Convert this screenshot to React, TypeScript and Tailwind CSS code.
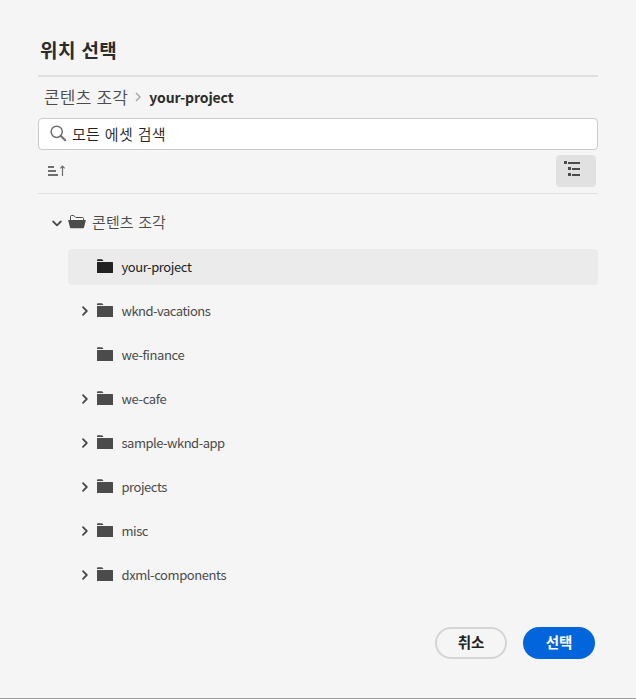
import React from "react";

type Item = { name: string; expandable: boolean; selected?: boolean; tracking: string };

const items: Item[] = [
  { name: "your-project", expandable: false, selected: true, tracking: "tracking-[-0.4px]" },
  { name: "wknd-vacations", expandable: true, tracking: "tracking-[-0.5px]" },
  { name: "we-finance", expandable: false, tracking: "tracking-[-0.4px]" },
  { name: "we-cafe", expandable: true, tracking: "tracking-[-0.34px]" },
  { name: "sample-wknd-app", expandable: true, tracking: "tracking-[-0.5px]" },
  { name: "projects", expandable: true, tracking: "tracking-[-0.45px]" },
  { name: "misc", expandable: true, tracking: "tracking-[-0.45px]" },
  { name: "dxml-components", expandable: true, tracking: "tracking-[-0.42px]" },
];

function FolderIcon() {
  return (
    <svg width="16" height="14" viewBox="0 0 16 14" fill="currentColor" className="block shrink-0">
      <path d="M0 2V1Q0 .2 1 .2H4.6Q5.2 .2 5.6 .8L6.5 2Z" />
      <path d="M0 3H15.5Q16 3 16 3.5V13.5Q16 14 15.5 14H.5Q0 14 0 13.5Z" />
    </svg>
  );
}

function ChevronRight() {
  return (
    <svg width="8" height="10" viewBox="0 0 8 10" fill="none" stroke="currentColor" strokeWidth="1.8" strokeLinecap="round" strokeLinejoin="round" className="block shrink-0">
      <path d="M2 1.2L5.8 5L2 8.8" />
    </svg>
  );
}

function Row({ item }: { item: Item }) {
  return (
    <li className={`flex h-9 items-center rounded-[4px] pl-[13px] ${item.selected ? "bg-[#ebebeb] text-[#222222]" : "text-[#4b4b4b]"}`}>
      <span className="flex w-4 shrink-0">{item.expandable && <ChevronRight />}</span>
      <span className="-mt-[2px]"><FolderIcon /></span>
      <span className={`ml-[8.5px] text-[13px] leading-5 ${item.tracking}`}>{item.name}</span>
    </li>
  );
}

export default function App() {
  return (
    <div className="flex h-[699px] w-[636px] flex-col border-b border-[#999999] bg-[#f5f5f5] px-[38px] font-['Noto_Sans_CJK_KR',sans-serif] text-[#4b4b4b]">
      <header className="flex h-[77px] items-end border-b-2 border-[#e1e1e1] pb-[11px] pl-[2px]">
        <h1 className="text-[19px] font-bold leading-[28px] tracking-[0.4px] text-[#2c2c2c] [word-spacing:1px]">위치 선택</h1>
      </header>
      <nav className="flex h-[41px] items-center pb-px pl-[6px]">
        <span className="text-[17px] font-[350] leading-6 tracking-[0.2px] [word-spacing:1px]">콘텐츠 조각</span>
        <svg width="6" height="10" viewBox="0 0 6 10" fill="none" stroke="#a8a8a8" strokeWidth="1.5" className="ml-[7px]">
          <path d="M1 1L5 5L1 9" />
        </svg>
        <span className="ml-[8px] text-[14px] font-bold leading-6 tracking-[-0.12px] text-[#2c2c2c]">your-project</span>
      </nav>
      <div className="flex h-8 shrink-0 items-center rounded-[4px] border border-[#cacaca] bg-white pl-[11px]">
        <svg width="17" height="17" viewBox="0 0 17 17" fill="none" stroke="#6e6e6e" strokeWidth="1.5" strokeLinecap="round" className="-mt-[2px]">
          <circle cx="6.7" cy="6.8" r="5.6" />
          <path d="M10.7 10.8L15.2 15.2" strokeWidth="2" />
        </svg>
        <span className="-mt-px ml-[5px] text-[15px] font-[350] leading-5 tracking-[0.3px] text-[#222222] [word-spacing:1px]">모든 에셋 검색</span>
      </div>
      <div className="flex h-11 shrink-0 justify-between border-b border-[#e1e1e1] pl-[10px] pr-[2px] pt-[5px]">
        <svg width="18" height="12" viewBox="0 0 18 12" fill="#6e6e6e" className="mt-[10px]">
          <path d="M0 1H6V3H0ZM0 5H8V7H0ZM0 9H10V11H0Z" />
          <path d="M14.5 11V1.5M12.3 3.4L14.5 1.2L16.7 3.4" fill="none" stroke="#6e6e6e" strokeWidth="1.2" />
        </svg>
        <button className="flex h-8 w-10 items-start rounded-[4px] bg-[#e1e1e1] pl-2 pt-[6px]">
          <svg width="16" height="16" viewBox="0 0 16 16" fill="#4b4b4b">
            <path d="M0 0H3V3H0ZM4 1H16V3H4ZM4 6H7V9H4ZM8 7H16V9H8ZM4 12H7V15H4ZM8 13H16V15H8Z" />
          </svg>
        </button>
      </div>
      <div className="mt-[18px] flex h-5 shrink-0 items-center pl-[14px]">
        <svg width="10" height="7" viewBox="0 0 10 7" fill="none" stroke="currentColor" strokeWidth="1.8" strokeLinecap="round" strokeLinejoin="round" className="mt-[2px]">
          <path d="M1.2 1.5L5 5.3L8.8 1.5" />
        </svg>
        <svg width="18" height="14" viewBox="0 0 18 14" className="ml-[6px]">
          <path d="M2.5 5V1.5Q2.5 .5 3.5 .5H5.8L7.8 2.5H14.5Q15.5 2.5 15.5 3.5V5" fill="none" stroke="#4b4b4b" />
          <path d="M.6 5H17.4Q18 5 17.8 5.6L16 12.6Q15.8 13.2 15.2 13.2H2.8Q2.2 13.2 2 12.6L.2 5.6Q0 5 .6 5Z" fill="#4b4b4b" />
        </svg>
        <span className="ml-[6px] text-[15px] font-[350] leading-5 tracking-[0.1px] [word-spacing:1px]">콘텐츠 조각</span>
      </div>
      <ul className="ml-[30px] mt-[17px] flex flex-col gap-2">
        {items.map((item) => <Row key={item.name} item={item} />)}
      </ul>
      <footer className="mt-[34px] flex justify-end gap-4 pr-[3px]">
        <button className="h-8 w-[72px] rounded-full border-2 border-[#d5d5d5] pb-[2px] text-[14.5px] font-bold leading-5 text-[#222222]">취소</button>
        <button className="h-8 w-[72px] rounded-full bg-[#0265dc] pb-[2px] text-[14.5px] font-bold leading-5 text-white">선택</button>
      </footer>
    </div>
  );
}
